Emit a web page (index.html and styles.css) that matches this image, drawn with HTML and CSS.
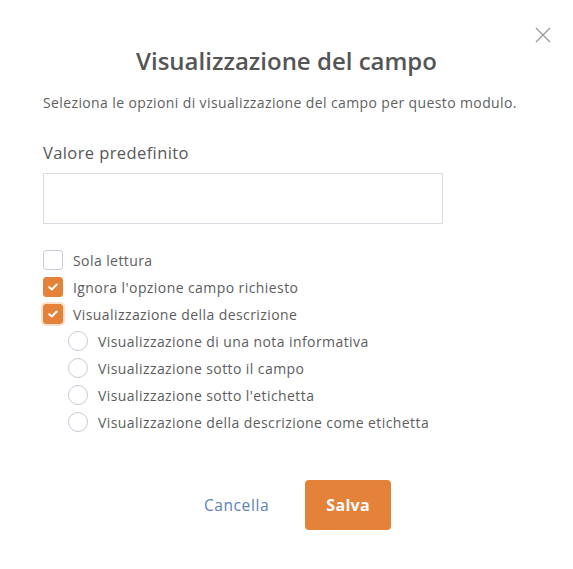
FILE: index.html
```html
<!DOCTYPE html>
<html lang="it">
<head>
<meta charset="utf-8">
<title>Visualizzazione del campo</title>
<link rel="stylesheet" href="styles.css">
</head>
<body>
<div class="modal">
  <button class="close" aria-label="Chiudi">
    <svg width="16" height="16" viewBox="0 0 16 16"><path d="M1 1L15 15M15 1L1 15" stroke="#9a9a9a" stroke-width="1.3" fill="none"/></svg>
  </button>
  <h1 class="title">Visualizzazione del campo</h1>
  <p class="desc">Seleziona le opzioni di visualizzazione del campo per questo modulo.</p>
  <label class="field-label">Valore predefinito</label>
  <div class="input"></div>
  <div class="options">
    <div class="row"><span class="cb"></span><span>Sola lettura</span></div>
    <div class="row"><span class="cb on"><svg width="10" height="8" viewBox="0 0 10 8"><path d="M1.3 4.2L3.8 6.5L8.7 1.5" stroke="#fff" stroke-width="2" fill="none" stroke-linecap="round" stroke-linejoin="round"/></svg></span><span>Ignora l'opzione campo richiesto</span></div>
    <div class="row"><span class="cb on focus"><svg width="10" height="8" viewBox="0 0 10 8"><path d="M1.3 4.2L3.8 6.5L8.7 1.5" stroke="#fff" stroke-width="2" fill="none" stroke-linecap="round" stroke-linejoin="round"/></svg></span><span>Visualizzazione della descrizione</span></div>
    <div class="sub">
      <div class="row"><span class="rd"></span><span>Visualizzazione di una nota informativa</span></div>
      <div class="row"><span class="rd"></span><span>Visualizzazione sotto il campo</span></div>
      <div class="row"><span class="rd"></span><span>Visualizzazione sotto l'etichetta</span></div>
      <div class="row"><span class="rd"></span><span>Visualizzazione della descrizione come etichetta</span></div>
    </div>
  </div>
  <div class="actions">
    <button class="cancel">Cancella</button>
    <button class="save">Salva</button>
  </div>
</div>
</body>
</html>
```
FILE: styles.css
```css
* { box-sizing: border-box; }
html, body { margin: 0; background: #fff; }
body {
  font-family: "Open Sans", Lato, sans-serif;
  color: #5b5b5b;
  width: 573px;
  height: 569px;
}
.modal {
  position: relative;
  padding: 44px 43px 0 43px;
}
.close {
  position: absolute;
  top: 27px;
  right: 22px;
  width: 16px;
  height: 16px;
  padding: 0;
  border: 0;
  background: none;
  display: block;
}
.close svg { display: block; }
.title {
  margin: 0;
  text-align: center;
  font-size: 24px;
  line-height: 34px;
  font-weight: 600;
  color: #555;
}
.desc {
  margin: 15px 0 0;
  font-size: 14px;
  line-height: 20px;
  letter-spacing: 0.38px;
  color: #5f5f5f;
}
.field-label {
  display: block;
  margin-top: 29px;
  font-size: 16.5px;
  line-height: 22px;
  letter-spacing: 0.4px;
  color: #575757;
}
.input {
  margin-top: 9px;
  width: 400px;
  height: 51px;
  border: 1px solid #dadbe3;
}
.options {
  margin-top: 26px;
  display: flex;
  flex-direction: column;
  gap: 7px;
}
.sub {
  display: flex;
  flex-direction: column;
  gap: 7px;
  padding-left: 25px;
}
.row {
  display: flex;
  align-items: center;
  gap: 10px;
  height: 20px;
  font-size: 14px;
  letter-spacing: 0.42px;
  color: #5d5d5d;
}
.cb {
  width: 20px;
  height: 20px;
  border: 1px solid #c9cbd8;
  border-radius: 3px;
  flex: none;
  display: flex;
  align-items: center;
  justify-content: center;
}
.cb.on {
  background: #e5823a;
  border-color: #e5823a;
}
.cb.focus {
  box-shadow: 0 0 0 2px #fbe0cc;
}
.rd {
  width: 20px;
  height: 20px;
  border: 1px solid #c9cbd8;
  border-radius: 50%;
  flex: none;
}
.actions {
  margin-top: 48px;
  display: flex;
  justify-content: center;
  align-items: center;
  gap: 36px;
  padding-left: 22px;
}
.cancel {
  border: 0;
  background: none;
  font-family: inherit;
  font-size: 15.5px;
  letter-spacing: 0.6px;
  color: #5b82b8;
  padding: 0;
}
.save {
  width: 86px;
  height: 50px;
  border: 0;
  border-radius: 4px;
  background: #e5823a;
  color: #fff;
  font-family: inherit;
  font-size: 16px;
  font-weight: 700;
  letter-spacing: 0.3px;
}
```
